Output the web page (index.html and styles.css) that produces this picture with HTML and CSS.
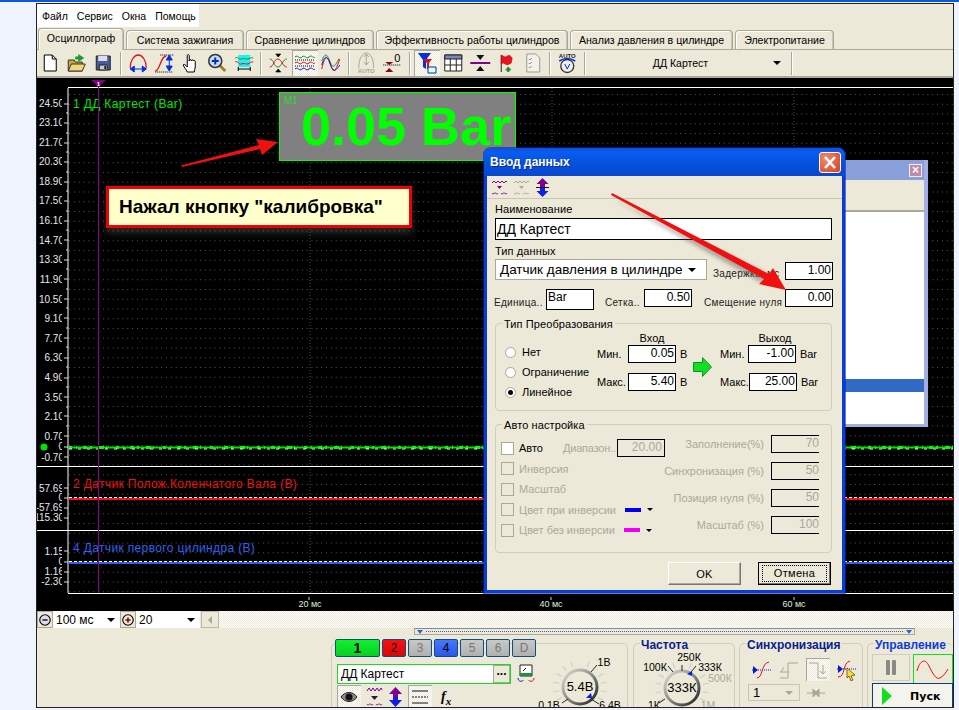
FILE: index.html
```html
<!DOCTYPE html>
<html lang="ru">

<head>
    <meta charset="UTF-8">
    <meta name="viewport" content="width=device-width, initial-scale=1.0">
    <title>Осциллограф</title>
    <link rel="stylesheet" href="styles.css">
</head>

<body>
    <div class="topline"></div>
    <div class="window">
        <!-- меню -->
        <div class="menu">
            <span>Файл</span><span>Сервис</span><span>Окна</span><span>Помощь</span>
        </div>

        <!-- вкладки -->
        <div class="tabs">
            <div class="tab active" style="width:86px">Осциллограф</div>
            <div class="tab" style="width:118px">Система зажигания</div>
            <div class="tab" style="width:128px">Сравнение цилиндров</div>
            <div class="tab" style="width:192px">Эффективность работы цилиндров</div>
            <div class="tab" style="width:163px">Анализ давления в цилиндре</div>
            <div class="tab" style="width:99px">Электропитание</div>
        </div>

        <!-- панель инструментов -->
        <div class="toolbar">
            <svg class="tb" width="16" height="20" viewBox="0 0 16 20"><path d="M2 2h8l4 4v12H2z" fill="#fff" stroke="#000"/><path d="M10 2v4h4" fill="none" stroke="#000"/></svg>
            <svg class="tb" width="20" height="20" viewBox="0 0 20 20"><path d="M1 18V7h6l1 2h7v9z" fill="#c8a838" stroke="#333"/><path d="M1 18l3-7h14l-3 7z" fill="#f0d878" stroke="#333"/><path d="M11 1l6 4-6 4V6.500H8V3.500h3z" fill="#1a9a30"/></svg>
            <svg class="tb" width="16" height="18" viewBox="0 0 16 18"><path d="M1 2h14v14H1z" fill="#4a5aa0" stroke="#222"/><path d="M3 2h9v5H3z" fill="#dde"/><path d="M4 11h8v5H4z" fill="#ccc" stroke="#222"/><path d="M9 12h2v3H9z" fill="#222"/></svg>
            <i class="sep"></i>
            <svg class="tb" width="20" height="20" viewBox="0 0 20 20"><path d="M2 15C2 7 6 2 10 2s8 5 8 13" fill="none" stroke="#e01010" stroke-width="1.300"/><path d="M2 16h16M2 16l4-3v6zM18 16l-4-3v6z" fill="#0030e0" stroke="#0030e0"/></svg>
            <svg class="tb" width="20" height="20" viewBox="0 0 20 20"><path d="M1 18c5 0 5-15 11-15" fill="none" stroke="#e01010" stroke-width="1.300"/><path d="M6 2h13M1 19h18" stroke="#000" stroke-dasharray="1 1"/><path d="M15 3v14M15 2l-3 5h6zM15 18l-3-5h6z" fill="#0030e0" stroke="#0030e0"/></svg>
            <svg class="tb" width="18" height="20" viewBox="0 0 18 20"><path d="M5 19c-1-3-3-4-4-7l1-1 3 3V3c0-2 2-2 2 0v5c0-2 2-2 2 0 0-1.500 2-1.500 2 0 0-1 2-1 2 .5V14c0 2-1 3-1 5z" fill="#fff" stroke="#000"/></svg>
            <svg class="tb" width="20" height="20" viewBox="0 0 20 20"><path d="M12 12l6 6" stroke="#a08020" stroke-width="3"/><circle cx="8" cy="8" r="6.500" fill="#c8dcf0" stroke="#333" stroke-width="1.500"/><path d="M4.500 8h7M8 4.500v7" stroke="#0030c0" stroke-width="2"/></svg>
            <svg class="tb" width="20" height="20" viewBox="0 0 20 20"><path d="M4 2h12v12H4z" fill="#20f0f0"/><path d="M1 5c3-2 3 2 6 1s3 0 6 0 3-2 6-1" fill="none" stroke="#109030"/><path d="M1 9c3-2 3 3 6 2s3 0 6 0 3-3 6-2" fill="none" stroke="#e01010"/><path d="M4 14v4M16 14v4M4 16h12" stroke="#000"/></svg>
            <i class="sep"></i>
            <svg class="tb" width="19" height="20" viewBox="0 0 19 20"><path d="M1 6c4 0 4 8 8 8s5-8 9-8" fill="none" stroke="#109030"/><path d="M1 14c4 0 4-8 8-8s5 8 9 8" fill="none" stroke="#e01010"/><path d="M9.500 1v3M9.500 16v3M7 1h5l-2.500 3zM7 19h5l-2.500-3z" fill="#000" stroke="#000" stroke-width=".6"/></svg>
            <div class="tb-on"><svg width="20" height="20" viewBox="0 0 20 20"><path d="M0 4c3-3 4 3 7 0s4 3 7 0 4 2 6 0" fill="none" stroke="#109030"/><path d="M0 10c3-3 4 3 7 0s4 3 7 0 4 2 6 0" fill="none" stroke="#e01010"/><path d="M0 16c3-3 4 3 7 0s4 3 7 0 4 2 6 0" fill="none" stroke="#0020e0"/><path d="M0 7h20M0 13h20" stroke="#000" stroke-dasharray="1 1"/></svg></div>
            <svg class="tb" width="19" height="20" viewBox="0 0 19 20"><path d="M0 8c3-8 5-8 8 0s5 6 9-2" fill="none" stroke="#109030"/><path d="M0 16C3 2 6 2 9 12s5 6 9-6" fill="none" stroke="#e01010"/><path d="M0 12C3 2 5 2 8 10s5 10 10 2" fill="none" stroke="#0020e0"/></svg>
            <i class="sep"></i>
            <svg class="tb" width="19" height="22" viewBox="0 0 19 22"><path d="M2 16C2 6 6 1 9.500 1S17 6 17 16" fill="none" stroke="#a8a698"/><path d="M9.500 2v11M7 5l2.500-3 2.500 3M7 10l2.500 3 2.500-3" fill="none" stroke="#a8a698"/><text x="9.500" y="21" class="auto-txt" fill="#a8a698">AUTO</text></svg>
            <svg class="tb" width="20" height="20" viewBox="0 0 20 20"><path d="M1 12h18" stroke="#000" stroke-dasharray="1 1"/><path d="M3 9h8l-4 3zM3 19h8l-4-4z" fill="#8a0808"/><text x="12" y="9" class="zero-txt">0</text></svg>
            <i class="sep"></i>
            <div class="tb-on"><svg width="20" height="22" viewBox="0 0 20 22"><path d="M1 1h13L9 8v9L6 15V8z" fill="#0030e0"/><path d="M6 7h9l-3 4v6h-2v-6z" fill="#e01010"/><path d="M11 15h8v6h-8z" fill="#dfe" stroke="#0030a0"/></svg></div>
            <svg class="tb" width="19" height="18" viewBox="0 0 19 18"><path d="M1 1h17v16H1z" fill="#fff" stroke="#222"/><path d="M1 1h17v4H1z" fill="#7888b8" stroke="#222"/><path d="M6.500 5v12M12.500 5v12M1 11h17" stroke="#222"/></svg>
            <svg class="tb" width="20" height="20" viewBox="0 0 20 20"><path d="M0 10h20" stroke="#800090" stroke-width="2"/><path d="M6 2h8l-4 5zM6 18h8l-4-5z" fill="#111"/></svg>
            <svg class="tb" width="14" height="20" viewBox="0 0 14 20"><path d="M2 2v17" stroke="#222"/><path d="M2 2l4 2 4-2 3 3-1 5-4 2-4-2-2 1z" fill="#f01020" stroke="#a00010" stroke-width=".5"/><path d="M9 14v5M6.500 16.500h5" stroke="#109030" stroke-width="2"/></svg>
            <svg class="tb" width="15" height="20" viewBox="0 0 15 20"><path d="M1 1h9l4 4v14H1z" fill="#f4f2e8" stroke="#999"/><path d="M3 6l1 1 2-2M3 10l1 1 2-2M3 14l1 1 2-2" fill="none" stroke="#888"/></svg>
            <i class="sep"></i>
            <svg class="tb" width="18" height="22" viewBox="0 0 18 22"><text x="9" y="6" class="auto-txt" fill="#222">AUTO</text><path d="M1 9c5-3 11-3 16 0" fill="none" stroke="#0030e0" stroke-width="1.500"/><circle cx="9" cy="14" r="6.500" fill="#eee" stroke="#333" stroke-width="1.300"/><path d="M6.500 12l2.500 5 2.500-5" fill="none" stroke="#0030e0"/></svg>
            <i class="sep"></i>
            <div class="channel-pick"><span class="channel-name">ДД Картест</span><i class="caret"></i></div>
            <i class="sep"></i>
        </div>

        <!-- осциллограмма -->
        <div class="scope">
            <svg class="scope-art" width="916" height="533" viewBox="37 78 916 533">
                <defs>
                    <pattern id="dots" patternUnits="userSpaceOnUse" width="4.850" height="9.750" x="69" y="94">
                        <rect width="1" height="1" fill="#565656"/>
                    </pattern>
                    <clipPath id="axis-clip"><rect x="30" y="78" width="32" height="533"/></clipPath>
                </defs>
                <rect x="69" y="88" width="884" height="505" fill="url(#dots)"/>
                <path d="M310 88v505M552 88v505M794 88v505" stroke="#4c4c4c" stroke-dasharray="1 2"/>

                <g clip-path="url(#axis-clip)" class="axis">
                    <text x="64" y="107">24.50</text>
                    <text x="64" y="126">23.10</text>
                    <text x="64" y="146">21.70</text>
                    <text x="64" y="165">20.30</text>
                    <text x="64" y="185">18.90</text>
                    <text x="64" y="204">17.50</text>
                    <text x="64" y="224">16.10</text>
                    <text x="64" y="244">14.70</text>
                    <text x="64" y="263">13.30</text>
                    <text x="64" y="283">11.90</text>
                    <text x="64" y="303">10.50</text>
                    <text x="64" y="322">9.10</text>
                    <text x="64" y="342">7.70</text>
                    <text x="64" y="361">6.30</text>
                    <text x="64" y="381">4.90</text>
                    <text x="64" y="401">3.50</text>
                    <text x="64" y="420">2.10</text>
                    <text x="64" y="440">0.70</text>
                    <text x="64" y="450">0</text>
                    <text x="64" y="461">-0.70</text>
                    <text x="64" y="492">57.69</text>
                    <text x="64" y="501">0</text>
                    <text x="64" y="511">-57.69</text>
                    <text x="64" y="521">115.30</text>
                    <text x="64" y="555">1.15</text>
                    <text x="64" y="565">0</text>
                    <text x="64" y="575">1.16</text>
                    <text x="64" y="585">-2.30</text>
                </g>
                <path class="ticks" d="M64 104h4M66 113h2M64 123h4M66 133h2M64 143h4M66 152h2M64 162h4M66 172h2M64 182h4M66 191h2M64 201h4M66 211h2M64 221h4M66 230h2M64 240h4M66 250h2M64 260h4M66 269h2M64 279h4M66 289h2M64 299h4M66 308h2M64 318h4M66 328h2M64 338h4M66 347h2M64 358h4M66 367h2M64 378h4M66 387h2M64 397h4M66 407h2M64 416h4M66 426h2M64 436h4M64 447h4M64 457h4M64 488h4M64 498h4M64 508h4M64 518h4M64 551h4M64 562h4M64 572h4M64 582h4"/>
                <path d="M68 88v505M68 87.500h885M36 466.500h917M36 530.500h917M68 593.500h885" stroke="#fff" fill="none"/>

                <text x="73" y="108" class="trace-name" fill="#00e400">1 ДД Картест (Bar)</text>
                <text x="73" y="488" class="trace-name" fill="#f01010">2 Датчик Полож.Коленчатого Вала (В)</text>
                <text x="73" y="552" class="trace-name" fill="#3060f0">4 Датчик первого цилиндра (В)</text>

                <!-- сигналы -->
                <path d="M69 447.500h884" stroke="#00e400" stroke-width="2"/>
                <path d="M69 447.500h884" stroke="#00ff00" stroke-width="3" stroke-dasharray="3 4 1 6 4 3 2 7 5 2 1 9"/>
                <path d="M69 449h884" stroke="#d8ffd8" stroke-dasharray="3 6"/>
                <path d="M69 499h884" stroke="#ff1010" stroke-width="2"/>
                <path d="M69 497.500h884" stroke="#fff" stroke-dasharray="3 2"/>
                <path d="M69 563h884" stroke="#2f60f0" stroke-width="2"/>
                <path d="M69 561.500h884" stroke="#fff" stroke-dasharray="3 2"/>
                <circle cx="44" cy="447" r="3.500" fill="#00e400"/>

                <!-- курсор -->
                <path d="M98.500 87v506" stroke="#900090"/>
                <path d="M91 80h15l-7.500 7z" fill="#800080"/>
                <text x="98.500" y="85.500" class="cursor-num">1</text>

                <path d="M309 600v-3M551 600v-3M794 600v-3" stroke="#ccc"/>
                <text x="310" y="607" class="time">20 мс</text>
                <text x="551" y="607" class="time">40 мс</text>
                <text x="794" y="607" class="time">60 мс</text>
            </svg>

            <!-- маркер -->
            <div class="marker">
                <span class="marker-name">M1</span>
                <span class="marker-value">0.05 Bar</span>
            </div>

            <div class="callout">Нажал кнопку "калибровка"</div>

            <!-- окно за диалогом -->
            <div class="back-win">
                <div class="back-title"><i class="back-close">×</i></div>
                <div class="back-band"></div>
                <div class="back-list"><div class="back-row"></div></div>
            </div>

            <!-- диалог -->
            <div class="dlg">
                <div class="dlg-title">
                    <span>Ввод данных</span>
                    <i class="dlg-close">
                        <svg width="22" height="21" viewBox="0 0 22 21"><path d="M6 5l10 11M16 5L6 16" stroke="#fff" stroke-width="2.600"/></svg>
                    </i>
                </div>
                <div class="dlg-tools">
                    <svg width="17" height="16" viewBox="0 0 17 16"><path d="M1 4l2-2 2 2 2-2 2 2 2-2 2 2 2-2 1 1" fill="none" stroke="#800090"/><path d="M1 14c1 2 2 0 3 0s2 2 3 0M10 14c1 2 2 0 3 0s2 2 3 0" fill="none" stroke="#800090"/><path d="M6 7h5L8.500 10z" fill="#800090"/></svg>
                    <svg width="17" height="16" viewBox="0 0 17 16"><path d="M1 4l2-2 2 2 2-2 2 2 2-2 2 2 2-2 1 1" fill="none" stroke="#a8a698"/><path d="M1 14c1 2 2 0 3 0s2 2 3 0M10 14c1 2 2 0 3 0s2 2 3 0" fill="none" stroke="#a8a698"/><path d="M6 7h5L8.500 10z" fill="#a8a698"/></svg>
                    <svg width="15" height="19" viewBox="0 0 15 19"><path d="M7.500 0L13.500 6H10V9H5V6H1.500z" fill="#800090"/><path d="M7.500 19L13.500 13H10V10H5V13H1.500z" fill="#1020e0"/><path d="M1 9.500h13" stroke="#111"/></svg>
                </div>
                <div class="dlg-body">
                    <label class="cap">Наименование</label>
                    <div class="field name-field">ДД Картест</div>
                    <label class="cap cap-type">Тип данных</label>
                    <div class="row-type">
                        <div class="select-type">Датчик давления в цилиндре<i class="caret"></i></div>
                        <span class="lbl lbl-delay">Задержка, мс</span>
                        <div class="field num">1.00</div>
                    </div>
                    <div class="row-units">
                        <span class="lbl">Единица..</span>
                        <div class="field unit">Bar</div>
                        <span class="lbl lbl-grid">Сетка..</span>
                        <div class="field num">0.50</div>
                        <span class="lbl lbl-zero">Смещение нуля</span>
                        <div class="field num">0.00</div>
                    </div>

                    <div class="group conv">
                        <span class="group-title">Тип Преобразования</span>
                        <div class="conv-body">
                            <div class="radios">
                                <div class="radio"><i></i>Нет</div>
                                <div class="radio"><i></i>Ограничение</div>
                                <div class="radio on"><i></i>Линейное</div>
                            </div>
                            <div class="minmax">
                                <div class="mm-head">Вход</div>
                                <div class="mm-row"><span class="mm-lbl">Мин.</span><div class="field num">0.05</div><span class="mm-unit">В</span></div>
                                <div class="mm-row"><span class="mm-lbl">Макс.</span><div class="field num">5.40</div><span class="mm-unit">В</span></div>
                            </div>
                            <svg class="conv-arrow" width="19" height="20" viewBox="0 0 19 20"><path d="M0.500 5.500H9.500V0.500L18.500 10 9.500 19.500V14.500H0.500z" fill="#10e020" stroke="#109030"/></svg>
                            <div class="minmax">
                                <div class="mm-head">Выход</div>
                                <div class="mm-row"><span class="mm-lbl">Мин.</span><div class="field num">-1.00</div><span class="mm-unit">Bar</span></div>
                                <div class="mm-row"><span class="mm-lbl">Макс.</span><div class="field num">25.00</div><span class="mm-unit">Bar</span></div>
                            </div>
                        </div>
                    </div>

                    <div class="group auto">
                        <span class="group-title">Авто настройка</span>
                        <div class="auto-body">
                            <div class="auto-left">
                                <div class="check live"><i></i>Авто<span class="range-lbl">Диапазон..</span><div class="field off-num">20.00</div></div>
                                <div class="check"><i></i>Инверсия</div>
                                <div class="check"><i></i>Масштаб</div>
                                <div class="check"><i></i>Цвет при инверсии<b class="swatch blue"></b><i class="caret"></i></div>
                                <div class="check"><i></i>Цвет без инверсии<b class="swatch pink"></b><i class="caret"></i></div>
                            </div>
                            <div class="auto-right">
                                <div class="auto-row"><span>Заполнение(%)</span><div class="field cut">70</div></div>
                                <div class="auto-row"><span>Синхронизация (%)</span><div class="field cut">50</div></div>
                                <div class="auto-row"><span>Позиция нуля (%)</span><div class="field cut">50</div></div>
                                <div class="auto-row"><span>Масштаб (%)</span><div class="field cut">100</div></div>
                            </div>
                        </div>
                    </div>

                    <div class="dlg-btns">
                        <div class="btn">OK</div>
                        <div class="btn default"><span>Отмена</span></div>
                    </div>
                </div>
            </div>

            <!-- стрелки поверх всего -->
            <svg class="scope-arrows" width="916" height="533" viewBox="37 78 916 533">
                <defs>
                    <filter id="soft"><feGaussianBlur stdDeviation="2"/></filter>
                </defs>
                <path d="M612 198L762 283 768 274z" fill="#555" opacity=".45" filter="url(#soft)"/>
                <path d="M181 165.500L259 145 256 139 278 142 262 155 260 149 182 167z" fill="#f01010"/>
                <path d="M612 193L769 274 773 268 786 290 759 284 764 279 611 195z" fill="#f01010"/>
            </svg>
        </div>

        <!-- полоса масштаба -->
        <div class="zoombar">
            <div class="zoom-btn"><svg width="16" height="16" viewBox="0 0 16 16"><circle cx="8" cy="8" r="6" fill="#dde" stroke="#000" stroke-width="1.300"/><path d="M5 8h6" stroke="#000" stroke-width="1.500"/></svg></div>
            <div class="zoom-pick w-time"><span class="pick-val">100 мс</span><i class="caret"></i></div>
            <div class="zoom-btn"><svg width="16" height="16" viewBox="0 0 16 16"><circle cx="8" cy="8" r="6" fill="#eed" stroke="#000" stroke-width="1.300"/><path d="M5 8h6M8 5v6" stroke="#900010" stroke-width="1.800"/></svg></div>
            <div class="zoom-pick w-count"><span class="pick-val">20</span><i class="caret"></i></div>
            <div class="scroll-btn"><i></i></div>
            <div class="scroll-track"></div>
        </div>

        <!-- нижняя панель -->
        <div class="panel">
            <div class="slider"><i class="tri"></i><span class="slider-dots"></span><i class="tri"></i></div>
            <div class="groups">
                <div class="pgroup channels">
                    <div class="ch-left">
                        <div class="ch-btns">
                            <div class="ch green">1</div>
                            <div class="ch red">2</div>
                            <div class="ch grey">3</div>
                            <div class="ch blue">4</div>
                            <div class="ch grey">5</div>
                            <div class="ch grey">6</div>
                            <div class="ch grey">D</div>
                        </div>
                        <div class="ch-input-row">
                            <div class="ch-input"><span>ДД Картест</span><b>...</b></div>
                            <svg width="18" height="20" viewBox="0 0 18 20"><path d="M3 1h12v11H3z" fill="#fff" stroke="#222"/><path d="M3 9h12v3H3z" fill="#209040"/><path d="M6 7l3-3" stroke="#222"/><path d="M1 14c0 4 5 4 5 2" fill="none" stroke="#0020d0"/><path d="M17 14c0 4-5 4-5 2" fill="none" stroke="#e01010"/></svg>
                        </div>
                        <div class="ch-tools">
                            <div class="pressed"><svg width="18" height="12" viewBox="0 0 18 12"><path d="M1 6c4-6 12-6 16 0-4 6-12 6-16 0z" fill="#888" stroke="#222"/><circle cx="9" cy="6" r="3.500" fill="#111"/></svg></div>
                            <svg width="17" height="20" viewBox="0 0 17 20"><path d="M1 4l2-3 2 3 2-3 2 3 2-3 2 3 2-3 1 2" fill="none" stroke="#800090"/><path d="M1 17c1 2 2 0 3 0s2 2 3 0M10 17c1 2 2 0 3 0s2 2 3 0" fill="none" stroke="#800090"/><path d="M5 9h7l-3.500 4z" fill="#222"/></svg>
                            <svg width="15" height="20" viewBox="0 0 15 20"><path d="M7.500 0L14 7H10V10H5V7H1z" fill="#800090"/><path d="M7.500 20L14 13H10V10H5V13H1z" fill="#1020e0"/></svg>
                            <div class="pressed"><svg width="18" height="16" viewBox="0 0 18 16"><path d="M1 2h16M1 14h16" stroke="#111"/><path d="M1 8h16" stroke="#111" stroke-dasharray="2 1"/></svg></div>
                            <span class="fx">f<sub>x</sub></span>
                        </div>
                    </div>
                    <svg class="dial" width="92" height="62" viewBox="536 646 92 62">
                        <use href="#ring" x="580" y="687"/>
                        <text x="580" y="691" class="dial-val">5.4В</text>
                        <path d="M591 672l6-7M591 699l8 5M568 699l-6 4" stroke="#222"/>
                        <path d="M586 698l5-5 1 5z" fill="#0020e0"/>
                        <text x="604" y="666" class="dial-lbl">1В</text>
                        <text x="549" y="709" class="dial-lbl">0.1В</text>
                        <text x="610" y="709" class="dial-lbl">6.4В</text>
                    </svg>
                </div>

                <div class="pgroup freq">
                    <span class="pg-title navy">Частота</span>
                    <svg class="dial" width="100" height="62" viewBox="634 646 100 62">
                        <use href="#ring" x="682" y="688"/>
                        <text x="682" y="692" class="dial-val">333К</text>
                        <path d="M682 671v-6M673 672l-5-6M691 672l5-6M665 699l-6 4" stroke="#222"/>
                        <path d="M687 674l5-3 0 5z" fill="#0020e0"/>
                        <text x="689" y="661" class="dial-lbl">250К</text>
                        <text x="655" y="671" class="dial-lbl">100К</text>
                        <text x="710" y="671" class="dial-lbl">333К</text>
                        <text x="720" y="682" class="dial-lbl off">500К</text>
                        <text x="654" y="709" class="dial-lbl">1К</text>
                        <text x="708" y="709" class="dial-lbl off">1М</text>
                    </svg>
                </div>

                <div class="pgroup sync">
                    <span class="pg-title navy">Синхронизация</span>
                    <div class="sync-icons">
                        <svg width="20" height="20" viewBox="0 0 20 20"><path d="M0 10h20" stroke="#0020d0" stroke-dasharray="1 1"/><path d="M1 6l5 4-5 4z" fill="#0020d0"/><path d="M5 18c6 0 4-15 12-16" fill="none" stroke="#e01010"/></svg>
                        <svg width="20" height="20" viewBox="0 0 20 20"><path d="M1 18h8V3h10M10 12H1M5 7l-3 5" fill="none" stroke="#a8a698"/></svg>
                        <div class="pressed"><svg width="20" height="20" viewBox="0 0 20 20"><path d="M1 3h9v15h9M15 5v9M12 11l3 3 3-3" fill="none" stroke="#a8a698"/></svg></div>
                        <svg width="20" height="22" viewBox="0 0 20 22"><path d="M0 10h20" stroke="#0020d0" stroke-dasharray="1 1"/><path d="M1 6l5 4-5 4z" fill="#0020d0"/><path d="M1 18c8 0 4-14 12-16" fill="none" stroke="#e01010"/><path d="M10 9l8 7-4 1 2 4-2 1-2-5-2 2z" fill="#f8e020" stroke="#222" stroke-width=".6"/></svg>
                    </div>
                    <div class="sync-row">
                        <div class="sync-select"><span>1</span><i class="caret off"></i></div>
                        <svg width="18" height="10" viewBox="0 0 18 10"><path d="M0 5h6M6 1v8L10 5zM18 5h-6M12 1v8L8 5z" fill="#a8a698" stroke="#a8a698"/></svg>
                    </div>
                </div>

                <div class="pgroup ctrl">
                    <span class="pg-title bright">Управление</span>
                    <div class="ctrl-top">
                        <div class="pause"><i></i><i></i></div>
                        <div class="sine"><svg width="34" height="22" viewBox="0 0 34 22"><path d="M1 13C4 2 9 0 13 8s7 14 11 12 6-6 8-9" fill="none" stroke="#e01010"/></svg></div>
                    </div>
                    <div class="start"><i></i><span>Пуск</span></div>
                </div>
            </div>
        </div>
    </div>

    <!-- общие части ручек -->
    <svg width="0" height="0" class="hidden-defs">
        <defs>
            <linearGradient id="ring-grad" x1="0" y1="0" x2="1" y2="1">
                <stop offset="0" stop-color="#e0ded2"/>
                <stop offset="0.5" stop-color="#8c8c88"/>
                <stop offset="1" stop-color="#1c1c1c"/>
            </linearGradient>
            <g id="ring">
                <g stroke="#d0cdbd">
                    <path d="M0-21v-6" transform="rotate(-120)"/>
                    <path d="M0-21v-6" transform="rotate(-100)"/>
                    <path d="M0-21v-6" transform="rotate(-80)"/>
                    <path d="M0-21v-6" transform="rotate(-60)"/>
                    <path d="M0-21v-6" transform="rotate(-40)"/>
                    <path d="M0-21v-6" transform="rotate(-20)"/>
                    <path d="M0-21v-6" transform="rotate(20)"/>
                    <path d="M0-21v-6" transform="rotate(60)"/>
                    <path d="M0-21v-6" transform="rotate(80)"/>
                    <path d="M0-21v-6" transform="rotate(100)"/>
                    <path d="M0-21v-6" transform="rotate(120)"/>
                </g>
                <circle r="17" fill="#ece9d8" stroke="url(#ring-grad)" stroke-width="3"/>
            </g>
        </defs>
    </svg>
</body>

</html>
```

FILE: styles.css
```css
* {
    box-sizing: border-box;
}

body {
    margin: 0;
    width: 959px;
    height: 710px;
    overflow: hidden;
    background-color: #eef3fd;
    font-family: "Liberation Sans", Arial, sans-serif;
    font-size: 11px;
    color: #000;
}

i {
    font-style: normal;
}

.hidden-defs {
    position: absolute;
}

.topline {
    height: 3px;
    border-top: 2px solid #0a58d8;
}

.window {
    width: 918px;
    height: 705px;
    margin-left: 36px;
    border: 1px solid #222;
    background-color: #ece9d8;
    display: flex;
    flex-direction: column;
}

.caret {
    display: inline-block;
    width: 0;
    height: 0;
    border-left: 4px solid transparent;
    border-right: 4px solid transparent;
    border-top: 4px solid #000;
}

.caret.off {
    border-top-color: #a8a698;
}

/* меню */
.menu {
    width: 162px;
    height: 23px;
    background-color: #fff;
    display: flex;
    align-items: center;
    gap: 9px;
    padding-left: 5px;
    font-size: 10.500px;
}

/* вкладки */
.tabs {
    height: 22px;
    display: flex;
    align-items: flex-end;
    padding-left: 1px;
    position: relative;
}

.tab {
    height: 19px;
    margin-right: 2px;
    border: 1px solid #aca899;
    border-bottom: 0;
    border-radius: 4px 4px 0 0;
    background-color: #ece9d8;
    text-align: center;
    line-height: 18px;
    font-size: 10.600px;
    white-space: nowrap;
    box-shadow: inset -1px 0 0 #c8c5b4, inset 1px 1px 0 #fff;
}

.tab.active {
    height: 22px;
    line-height: 18px;
    margin-bottom: -1px;
    position: relative;
    z-index: 1;
}

.toolbar {
    height: 29px;
    flex: none;
    border-top: 1px solid #aca899;
    border-bottom: 2px solid #aca899;
    display: flex;
    align-items: center;
}

.tb {
    flex: none;
    width: 26.500px;
}

.tb-on {
    flex: none;
    width: 26.500px;
    height: 26px;
    display: flex;
    align-items: center;
    justify-content: center;
    background: repeating-conic-gradient(#fff 0 25%, #ece9d8 0 50%) 0 0 / 2px 2px;
    box-shadow: inset 1px 1px 0 #aca899;
}

.sep {
    flex: none;
    width: 2px;
    height: 23px;
    margin: 0 3px;
    border-left: 1px solid #aca899;
    border-right: 1px solid #fff;
}

.auto-txt {
    font-size: 6px;
    font-weight: bold;
    text-anchor: middle;
}

.zero-txt {
    font-size: 11px;
}

.channel-pick {
    flex: none;
    width: 199px;
    display: flex;
    align-items: center;
    padding-right: 7px;
}

.channel-name {
    flex: 1;
    text-align: center;
    font-size: 10.500px;
}

/* осциллограмма */
.scope {
    position: relative;
    height: 533px;
    flex: none;
    background-color: #000;
    overflow: hidden;
}

.scope-art,
.scope-arrows {
    position: absolute;
    top: 0;
    left: 0;
}

.axis text {
    fill: #e8e8e8;
    font-size: 10px;
    text-anchor: end;
}

.ticks {
    stroke: #ddd;
}

.trace-name {
    font-size: 12px;
    letter-spacing: 0.35px;
}

.cursor-num {
    fill: #fff;
    font-size: 6px;
    font-weight: bold;
    text-anchor: middle;
}

.time {
    fill: #d8f0d8;
    font-size: 9px;
    text-anchor: middle;
}

.marker {
    position: absolute;
    left: 242px;
    top: 14px;
    width: 237px;
    height: 69px;
    border: 1px solid #00ff00;
    background-color: #808080;
    color: #00ff00;
    overflow: hidden;
}

.marker-name {
    position: absolute;
    left: 4px;
    top: 2px;
    font-size: 10px;
    color: #20e020;
}

.marker-value {
    position: absolute;
    left: 21px;
    top: 2px;
    font-size: 54px;
    font-weight: bold;
    white-space: nowrap;
}

.callout {
    position: absolute;
    left: 69px;
    top: 108px;
    width: 306px;
    height: 42px;
    border: 3px solid #f00000;
    background-color: #ffffcc;
    padding-left: 10px;
    line-height: 36px;
    font-size: 19px;
    font-weight: bold;
    box-shadow: 0 5px 8px rgba(120, 120, 120, 0.35);
}

/* окно за диалогом */
.back-win {
    position: absolute;
    left: 808px;
    top: 82px;
    width: 83px;
    height: 267px;
    border: 4px solid #a2aee4;
    border-width: 0 4px 3px 0;
    background-color: #fff;
}

.back-title {
    height: 20px;
    background-color: #8aa0dc;
    display: flex;
    justify-content: flex-end;
    align-items: center;
    padding-right: 2px;
}

.back-close {
    width: 13px;
    height: 13px;
    background-color: #c08aa8;
    border: 1px solid #eee;
    color: #fff;
    font-size: 12px;
    line-height: 10px;
    text-align: center;
    font-weight: bold;
}

.back-band {
    height: 32px;
    background-color: #ece9d8;
    border-bottom: 2px solid #aca899;
}

.back-list {
    padding-top: 167px;
}

.back-row {
    height: 13px;
    background-color: #316ac5;
}

/* диалог */
.dlg {
    position: absolute;
    left: 447px;
    top: 70px;
    width: 361px;
    height: 445px;
    border: solid #0a3cd0;
    border-width: 0 3px 3px;
    border-radius: 7px 7px 0 0;
    background-color: #ece9d8;
    box-shadow: 0 0 0 1px rgba(0, 40, 160, 0.6);
}

.dlg-title {
    height: 28px;
    margin: 0 -3px;
    padding: 0 4px 0 6px;
    border-radius: 7px 7px 0 0;
    background: linear-gradient(#0a50e0, #0a5cf0 15%, #0450dc 60%, #0a48d0);
    color: #fff;
    font-size: 12px;
    font-weight: bold;
    text-shadow: 1px 1px 0 #0a2a90;
    display: flex;
    align-items: center;
    justify-content: space-between;
}

.dlg-close {
    width: 22px;
    height: 21px;
    border: 1px solid #fff;
    border-radius: 3px;
    background: radial-gradient(circle at 30% 30%, #f08a70, #d84020);
    display: flex;
}

.dlg-close svg {
    margin: -1px;
}

.dlg-tools {
    height: 23px;
    border-bottom: 1px solid #c8c5b4;
    display: flex;
    align-items: center;
    gap: 5px;
    padding-left: 4px;
}

.dlg-body {
    padding: 0 0 0 8px;
    display: flex;
    flex-direction: column;
}

.cap {
    display: block;
    height: 14px;
    line-height: 14px;
    margin-top: 3px;
    letter-spacing: 0.1px;
}

.cap-type {
    margin-top: 4px;
}

.field {
    height: 18px;
    width: 48px;
    border: 1px solid #000;
    background-color: #fff;
    font-size: 12px;
    line-height: 15px;
    flex: none;
    white-space: nowrap;
}

.num {
    text-align: right;
    padding-right: 1px;
}

.name-field {
    width: 337px;
    height: 22px;
    margin-top: 2px;
    font-size: 14px;
    line-height: 20px;
    padding-left: 1px;
}

.row-type {
    display: flex;
    align-items: flex-end;
    height: 22px;
}

.select-type {
    width: 212px;
    height: 21px;
    border: 1px solid #aca899;
    background-color: #fff;
    font-size: 13.500px;
    line-height: 19px;
    padding-left: 4px;
    white-space: nowrap;
    position: relative;
}

.select-type .caret {
    margin-left: 6px;
    vertical-align: 2px;
}

.lbl {
    flex: none;
    font-size: 10px;
    letter-spacing: 0.3px;
    color: #222;
}

.lbl-delay {
    width: 72px;
    margin-left: 6px;
    padding-bottom: 1px;
}

.row-units {
    display: flex;
    align-items: flex-end;
    height: 22px;
    margin-top: 8px;
}

.row-units .field {
    height: 18px;
    margin-bottom: 3px;
}

.row-units .unit {
    height: 21px;
    margin-bottom: 0;
    padding-left: 1px;
}

.row-units .lbl {
    padding-bottom: 2px;
}

.row-units > .lbl:first-child {
    width: 52px;
    margin-left: -1px;
}

.lbl-grid {
    width: 39px;
    margin-left: 11px;
}

.lbl-zero {
    width: 81px;
    margin-left: 12px;
}

.group {
    width: 337px;
    border: 1px solid #d0cdbd;
    border-radius: 4px;
}

.group-title {
    display: table;
    margin: -7px 0 0 6px;
    padding: 0 2px;
    background-color: #ece9d8;
    line-height: 14px;
    letter-spacing: 0.1px;
}

.conv {
    height: 88px;
    margin-top: 13px;
}

.conv-body {
    display: flex;
    padding-left: 9px;
}

.radios {
    width: 92px;
    padding-top: 14px;
    display: flex;
    flex-direction: column;
    gap: 6px;
}

.radio {
    height: 14px;
    display: flex;
    align-items: center;
    gap: 6px;
    white-space: nowrap;
}

.radio i {
    width: 11px;
    height: 11px;
    border-radius: 50%;
    background-color: #fff;
    border: 1px solid #aca899;
    display: flex;
    align-items: center;
    justify-content: center;
}

.radio.on i::before {
    content: "";
    width: 5px;
    height: 5px;
    border-radius: 50%;
    background-color: #000;
}

.minmax {
    width: 97px;
}

.mm-head {
    height: 14px;
    margin-left: 31px;
    width: 48px;
    text-align: center;
    line-height: 14px;
}

.mm-row {
    display: flex;
    align-items: center;
    margin-bottom: 10px;
    white-space: nowrap;
}

.mm-lbl {
    width: 31px;
}

.mm-unit {
    margin-left: 4px;
}

.conv-arrow {
    margin: 26px 8px 0 0;
    flex: none;
    margin-left: -1px;
}

.auto {
    height: 129px;
    margin-top: 13px;
}

.auto-body {
    display: flex;
    padding: 0 0 0 5px;
}

.auto-left {
    width: 163px;
    flex: none;
    padding-top: 6px;
}

.check {
    height: 20.500px;
    display: flex;
    align-items: center;
    white-space: nowrap;
    color: #aca899;
    gap: 5px;
}

.check > i:first-child {
    width: 13px;
    height: 13px;
    flex: none;
    border: 1px solid #aca899;
}

.check.live {
    color: #000;
}

.check.live > i:first-child {
    background-color: #fff;
}

.range-lbl {
    color: #aca899;
    margin-left: 15px;
    letter-spacing: -0.2px;
}

.off-num {
    margin-left: -4px;
    text-align: right;
    color: #aca899;
    background-color: #ece9d8;
    padding-right: 2px;
}

.swatch {
    width: 16px;
    height: 4px;
    margin-left: 4px;
}

.swatch.blue {
    background-color: #0000f0;
}

.swatch.pink {
    background-color: #f000f0;
}

.check .caret {
    border-width: 3px 3px 0;
    margin-left: 1px;
}

.auto-right {
    padding-top: 3px;
    display: flex;
    flex-direction: column;
    gap: 9px;
}

.auto-row {
    display: flex;
    align-items: center;
    justify-content: flex-end;
    width: 155px;
    gap: 7px;
    color: #aca899;
}

.auto-row span {
    white-space: nowrap;
}

.cut {
    border-right: 0;
    background-color: #ece9d8;
    text-align: right;
    color: #aca899;
}

.dlg-btns {
    display: flex;
    justify-content: flex-end;
    gap: 17px;
    width: 336px;
    margin-top: 9px;
}

.btn {
    width: 73px;
    height: 23px;
    display: flex;
    align-items: center;
    justify-content: center;
    background-color: #ece9d8;
    border: 1px solid;
    border-color: #fff #777 #777 #fff;
    box-shadow: inset -1px -1px 0 #aca899;
    letter-spacing: 0.3px;
}

.btn.default {
    border: 1px solid #000;
    box-shadow: inset -1px -1px 0 #777;
}

.btn.default span {
    width: 65px;
    height: 17px;
    border: 1px dotted #000;
    text-align: center;
    line-height: 15px;
}

/* полоса масштаба */
.zoombar {
    height: 17px;
    flex: none;
    display: flex;
    align-items: stretch;
}

.zoom-btn {
    width: 16px;
    flex: none;
    display: flex;
    align-items: center;
    justify-content: center;
    background-color: #ece9d8;
    border: 1px solid #aca899;
}

.zoom-pick {
    flex: none;
    background-color: #fff;
    display: flex;
    align-items: center;
    justify-content: space-between;
    padding: 0 5px 0 3px;
    font-size: 12px;
}

.w-time {
    width: 67px;
}

.w-count {
    width: 64px;
    margin-right: 1px;
}

.scroll-btn {
    width: 18px;
    flex: none;
    display: flex;
    align-items: center;
    justify-content: center;
    background-color: #ece9d8;
    border: 1px solid #bbb9ac;
}

.scroll-btn i {
    border-top: 4px solid transparent;
    border-bottom: 4px solid transparent;
    border-right: 4px solid #aca899;
}

.scroll-track {
    flex: 1;
    background: repeating-conic-gradient(#fff 0 25%, #ece9d8 0 50%) 0 0 / 2px 2px;
}

/* нижняя панель */
.panel {
    height: 79px;
    flex: none;
    overflow: hidden;
}

.slider {
    width: 501px;
    height: 7px;
    margin-left: 377px;
    border: 1px solid #aca899;
    border-top-color: #888;
    display: flex;
    align-items: center;
    padding: 0 2px;
    gap: 3px;
}

.slider-dots {
    flex: 1;
    border-top: 1px dotted #3060c0;
}

.tri {
    border-left: 3px solid transparent;
    border-right: 3px solid transparent;
    border-top: 4px solid #3060d0;
}

.groups {
    display: flex;
    padding-left: 294px;
    height: 80px;
}

.pgroup {
    position: relative;
    margin-top: 8px;
    height: 90px;
    border: 1px solid #d0cdbd;
    border-radius: 5px;
    flex: none;
}

.pg-title {
    display: table;
    margin: -5px 0 0 6px;
    padding: 0 1px;
    background-color: #ece9d8;
    font-size: 12px;
    font-weight: bold;
    line-height: 12px;
}

.navy {
    color: #0a1c90;
}

.bright {
    color: #0c3ce0;
}

.channels {
    width: 297px;
    display: flex;
    padding-left: 3px;
}

.ch-left {
    width: 201px;
    margin-top: -5px;
}

.ch-btns {
    display: flex;
    gap: 2px;
}

.ch {
    width: 25px;
    height: 18px;
    border: 1px solid #0f4e7e;
    border-radius: 2px;
    text-align: center;
    line-height: 16px;
    font-size: 12px;
}

.ch.green {
    width: 47px;
    background: linear-gradient(#10f030, #08d020);
    font-weight: bold;
    font-size: 14px;
}

.ch.red {
    background: linear-gradient(#f81010, #d80808);
}

.ch.blue {
    background: linear-gradient(#4878f8, #2858e8);
}

.ch.grey {
    background: linear-gradient(#c8c8c8, #b0b0b0);
    color: #777;
}

.ch-input-row {
    display: flex;
    align-items: flex-start;
    gap: 6px;
    margin: 7px 0 0 2px;
}

.ch-input {
    width: 174px;
    height: 20px;
    border: 1px solid #10e020;
    background-color: #fff;
    display: flex;
    justify-content: space-between;
    padding-left: 3px;
    font-size: 12px;
    line-height: 18px;
}

.ch-input b {
    width: 17px;
    height: 18px;
    background-color: #ece9d8;
    border: 1px solid #aca899;
    text-align: center;
    line-height: 10px;
}

.ch-tools {
    display: flex;
    align-items: center;
    gap: 5px;
    margin: 1px 0 0 2px;
}

.pressed {
    width: 24px;
    height: 23px;
    display: flex;
    align-items: center;
    justify-content: center;
    background: repeating-conic-gradient(#fff 0 25%, #ece9d8 0 50%) 0 0 / 2px 2px;
    box-shadow: inset 1px 1px 0 #aca899;
    flex: none;
}

.fx {
    margin-left: 4px;
    font-family: "Liberation Serif", serif;
    font-size: 14px;
    font-style: italic;
    font-weight: bold;
}

.fx sub {
    font-size: 11px;
    line-height: 0;
}

.dial {
    flex: none;
    margin-top: 2px;
}

.dial-val {
    font-size: 13px;
    text-anchor: middle;
}

.dial-lbl {
    font-size: 10.500px;
    text-anchor: middle;
}

.dial-lbl.off {
    fill: #aca899;
}

.freq {
    width: 102px;
    margin-left: 5px;
}

.freq .dial {
    margin-top: -5px;
    display: block;
}

.sync {
    width: 124px;
    margin-left: 4px;
}

.sync-icons {
    display: flex;
    align-items: center;
    gap: 7px;
    padding-left: 12px;
    margin-top: 7px;
}

.sync-row {
    display: flex;
    align-items: center;
    gap: 7px;
    margin: 3px 0 0 8px;
}

.sync-select {
    width: 52px;
    height: 17px;
    border: 1px solid #c8c5b4;
    display: flex;
    align-items: center;
    justify-content: space-between;
    padding: 0 6px 0 4px;
    font-size: 13px;
}

.ctrl {
    width: 86px;
    margin-left: 4px;
    border-right: 0;
}

.ctrl-top {
    display: flex;
    gap: 3px;
    height: 29px;
    margin: 3px 0 0 4px;
}

.pause {
    width: 38px;
    height: 27px;
    border: 1px solid #d0cdbd;
    display: flex;
    justify-content: center;
    align-items: center;
    gap: 2px;
}

.pause i {
    width: 4px;
    height: 15px;
    background-color: #8a8a84;
    border-radius: 1px;
}

.sine {
    width: 40px;
    height: 29px;
    border: 1px solid #10e020;
    border-bottom: 0;
    display: flex;
    align-items: center;
    justify-content: center;
}

.start {
    width: 81px;
    height: 26px;
    margin-left: 4px;
    border: 1px solid #0f3e7e;
    background-color: #f4f3ec;
    display: flex;
    align-items: center;
    font-family: "DejaVu Sans", sans-serif;
    font-size: 11px;
    font-weight: bold;
    padding-left: 9px;
    gap: 18px;
}

.start i {
    border-top: 9px solid transparent;
    border-bottom: 9px solid transparent;
    border-left: 10px solid #10e020;
}
```
